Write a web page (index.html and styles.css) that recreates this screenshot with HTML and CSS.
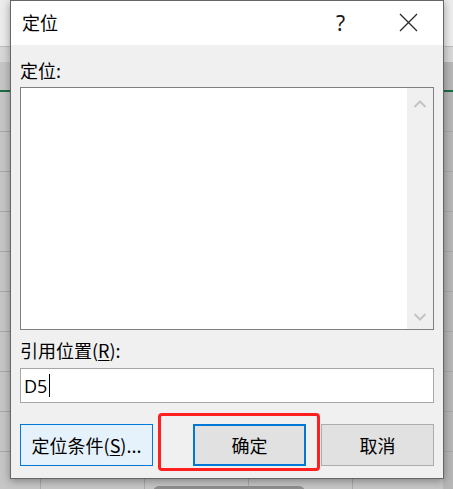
FILE: index.html
```html
<!DOCTYPE html>
<html lang="zh-CN">
<head>
<meta charset="utf-8">
<title>定位</title>
<link rel="stylesheet" href="styles.css">
</head>
<body>
<div class="sheet">
  <div class="sheet-head"></div>
  <div class="sheet-sub"></div>
  <div class="sheet-sel"></div>
  <div class="sheet-rows">
    <div class="row"></div><div class="row"></div><div class="row"></div>
    <div class="row"></div><div class="row"></div><div class="row"></div>
    <div class="row"></div><div class="row"></div><div class="row"></div>
    <div class="row"></div>
  </div>
</div>
<div class="tab-shape"></div>

<div class="dialog">
  <div class="titlebar">
    <span class="title">定位</span>
    <span class="help">?</span>
    <span class="close">
      <svg width="19" height="19" viewBox="0 0 19 19"><path d="M1 1 L18 18 M18 1 L1 18" stroke="#2b2b2b" stroke-width="1.3" fill="none"/></svg>
    </span>
  </div>
  <div class="body">
    <div class="label first">定位:</div>
    <div class="list">
      <div class="scroll">
        <svg width="14" height="10" viewBox="0 0 14 10"><path d="M1.5 8 L7 2.5 L12.5 8" stroke="#c4c4c4" stroke-width="2" fill="none"/></svg>
        <svg width="14" height="10" viewBox="0 0 14 10"><path d="M1.5 2 L7 7.5 L12.5 2" stroke="#c4c4c4" stroke-width="2" fill="none"/></svg>
      </div>
    </div>
    <div class="label second">引用位置(<u>R</u>):</div>
    <div class="input"><span>D5</span><span class="caret"></span></div>
    <div class="buttons">
      <div class="btn special">定位条件(<u>S</u>)...</div>
      <div class="btn ok">确定</div>
      <div class="btn cancel">取消</div>
    </div>
  </div>
</div>
<div class="highlight"></div>
</body>
</html>
```

FILE: styles.css
```css
html, body {
  margin: 0;
  padding: 0;
}
body {
  width: 453px;
  height: 489px;
  position: relative;
  overflow: hidden;
  font-family: "Noto Sans CJK SC", "Noto Sans", sans-serif;
  background: #c4c4c4;
}
.sheet {
  display: flex;
  flex-direction: column;
  width: 453px;
  height: 489px;
  background:
    repeating-linear-gradient(to right, transparent 0 103px, #a9a9a9 103px 104px) -63px 0 / auto 100% no-repeat,
    linear-gradient(to right, #c6c6c6 0 443px, #b6b6b6 443px);
}
.sheet-head {
  height: 46px;
  background: #ececec;
  border-bottom: 1px solid #bcbcbc;
  flex: none;
}
.sheet-sub {
  height: 15px;
  background: #d8d8d8;
  flex: none;
}
.sheet-sel {
  height: 28px;
  border-bottom: 2px solid #1e6c43;
  flex: none;
}
.sheet-rows {
  display: flex;
  flex-direction: column;
}
.row {
  height: 39px;
  border-bottom: 1px solid #a8a8a8;
  flex: none;
}
.tab-shape {
  position: absolute;
  left: 153px;
  top: 486px;
  width: 152px;
  height: 12px;
  background: #8e8e8e;
  border-radius: 6px 6px 0 0;
}

.dialog {
  position: absolute;
  left: 10px;
  top: 0;
  width: 434px;
  height: 479px;
  box-sizing: border-box;
  border: 1px solid #666;
  background: #f0f0f0;
  box-shadow: 0 2px 8px rgba(0, 0, 0, 0.35);
  display: flex;
  flex-direction: column;
}
.titlebar {
  height: 44px;
  background: #fff;
  display: flex;
  align-items: center;
  flex: none;
}
.title {
  margin-left: 11px;
  font-size: 18px;
  line-height: 24px;
  color: #000;
  margin-top: -2px;
}
.help {
  margin-left: auto;
  font-size: 21px;
  line-height: 24px;
  color: #1a1a1a;
  font-family: "Noto Sans", sans-serif;
  font-weight: 400;
  margin-top: -1px;
}
.close {
  display: flex;
  margin-left: 54px;
  margin-right: 25px;
  margin-top: -1px;
}
.body {
  padding: 0 9px;
  display: flex;
  flex-direction: column;
}
.label {
  font-size: 18px;
  line-height: 24px;
  height: 24px;
  color: #000;
}
.label u {
  text-underline-offset: 2px;
}
.label.first {
  margin-top: 13px;
}
.label.second {
  margin-top: 8px;
}
.list {
  margin-top: 5px;
  height: 243px;
  box-sizing: border-box;
  border: 1px solid #7f7f7f;
  background: #fff;
  display: flex;
  justify-content: flex-end;
}
.scroll {
  width: 26px;
  background: #f0f0f0;
  display: flex;
  flex-direction: column;
  align-items: center;
  justify-content: space-between;
  padding: 11px 0 7px;
}
.input {
  margin-top: 6px;
  height: 35px;
  box-sizing: border-box;
  border: 1px solid #a6a6a6;
  background: #fff;
  display: flex;
  align-items: center;
  padding-left: 3px;
  font-size: 18px;
  color: #000;
  font-family: "Open Sans", "Noto Sans", sans-serif;
}
.caret {
  width: 1px;
  height: 23px;
  background: #000;
  margin-left: 2px;
}
.buttons {
  margin-top: 21px;
  display: flex;
  gap: 15px;
}
.btn {
  flex: none;
  height: 42px;
  box-sizing: border-box;
  display: flex;
  align-items: center;
  justify-content: center;
  font-size: 18px;
  color: #000;
  background: #e1e1e1;
  border: 1px solid #adadad;
  width: 113px;
  white-space: nowrap;
}
.btn u {
  text-underline-offset: 2px;
}
.btn.special {
  width: 133px;
  background: #e5f1fb;
  border-color: #0078d7;
  margin-right: 25px;
}
.btn.ok {
  border: 2px solid #0078d7;
}
.highlight {
  position: absolute;
  left: 158px;
  top: 413px;
  width: 162px;
  height: 58px;
  box-sizing: border-box;
  border: 3px solid #ff1f1f;
  border-radius: 4px;
}
```
